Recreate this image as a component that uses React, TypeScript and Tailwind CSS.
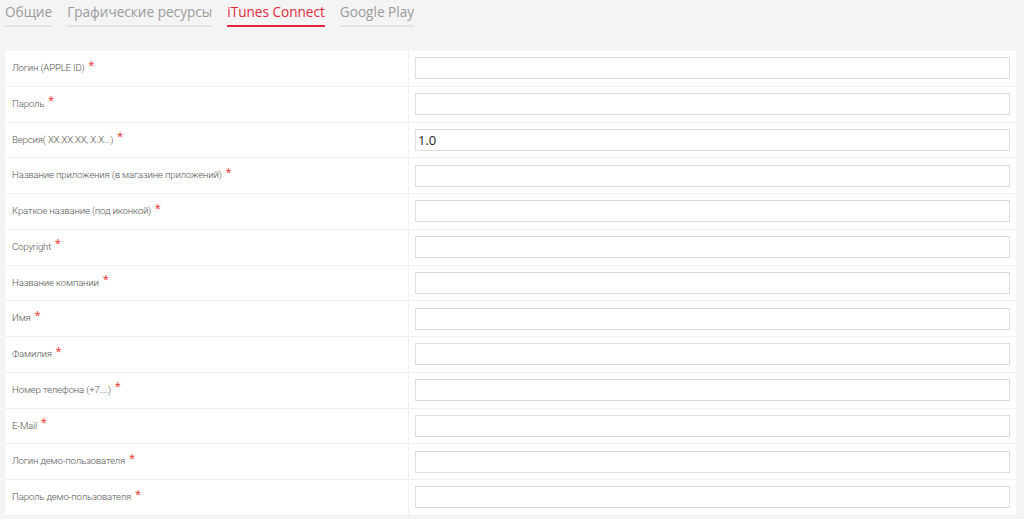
import React from 'react';

const tabs = ['Общие', 'Графические ресурсы', 'iTunes Connect', 'Google Play'];

const fields: { label: string; value?: string }[] = [
  { label: 'Логин (APPLE ID)' },
  { label: 'Пароль' },
  { label: 'Версия( XX.XX.XX, X.X...)', value: '1.0' },
  { label: 'Название приложения (в магазине приложений)' },
  { label: 'Краткое название (под иконкой)' },
  { label: 'Copyright' },
  { label: 'Название компании' },
  { label: 'Имя' },
  { label: 'Фамилия' },
  { label: 'Номер телефона (+7....)' },
  { label: 'E-Mail' },
  { label: 'Логин демо-пользователя' },
  { label: 'Пароль демо-пользователя' },
];

export default function App() {
  return (
    <div className="min-h-screen bg-[#f4f4f4] font-['Open_Sans',sans-serif]">
      {/* Tabs */}
      <div className="flex gap-[15px] pl-[5px] pt-[2px]">
        {tabs.map(t => {
          const active = t === 'iTunes Connect';
          return (
            <div
              key={t}
              className={
                active
                  ? 'text-[13.6px] leading-[20px] pb-[3px] text-[#e2293b] border-b-2 border-[#e2293b]'
                  : 'text-[13.6px] leading-[20px] pb-[3px] text-[#9a9a9a] border-b-2 border-[#e4e4e4]'
              }
            >
              {t}
            </div>
          );
        })}
      </div>

      {/* Form table */}
      <div className="mt-[24px] ml-[5px] w-[1011px] bg-white">
        {fields.map(f => (
          <div key={f.label} className="flex h-[35.75px] border-b border-[#f1f1f1]">
            <div className="w-[404px] border-r border-[#f1f1f1] flex items-center pl-[7px] font-['Roboto',sans-serif] font-light text-[9.7px] tracking-[-0.2px] text-[#555]">
              {f.label}
              <span className="ml-[4px] -mt-[6px] text-[13px] font-normal text-[#ea4d47]">*</span>
            </div>
            <div className="flex-1 flex items-center pl-[6px] pr-[6px]">
              <input
                defaultValue={f.value ?? ''}
                className="w-full h-[22px] border border-[#dcdcdc] px-[2px] text-[13px] text-[#222] font-['Open_Sans',sans-serif] outline-none"
              />
            </div>
          </div>
        ))}
      </div>
    </div>
  );
}
